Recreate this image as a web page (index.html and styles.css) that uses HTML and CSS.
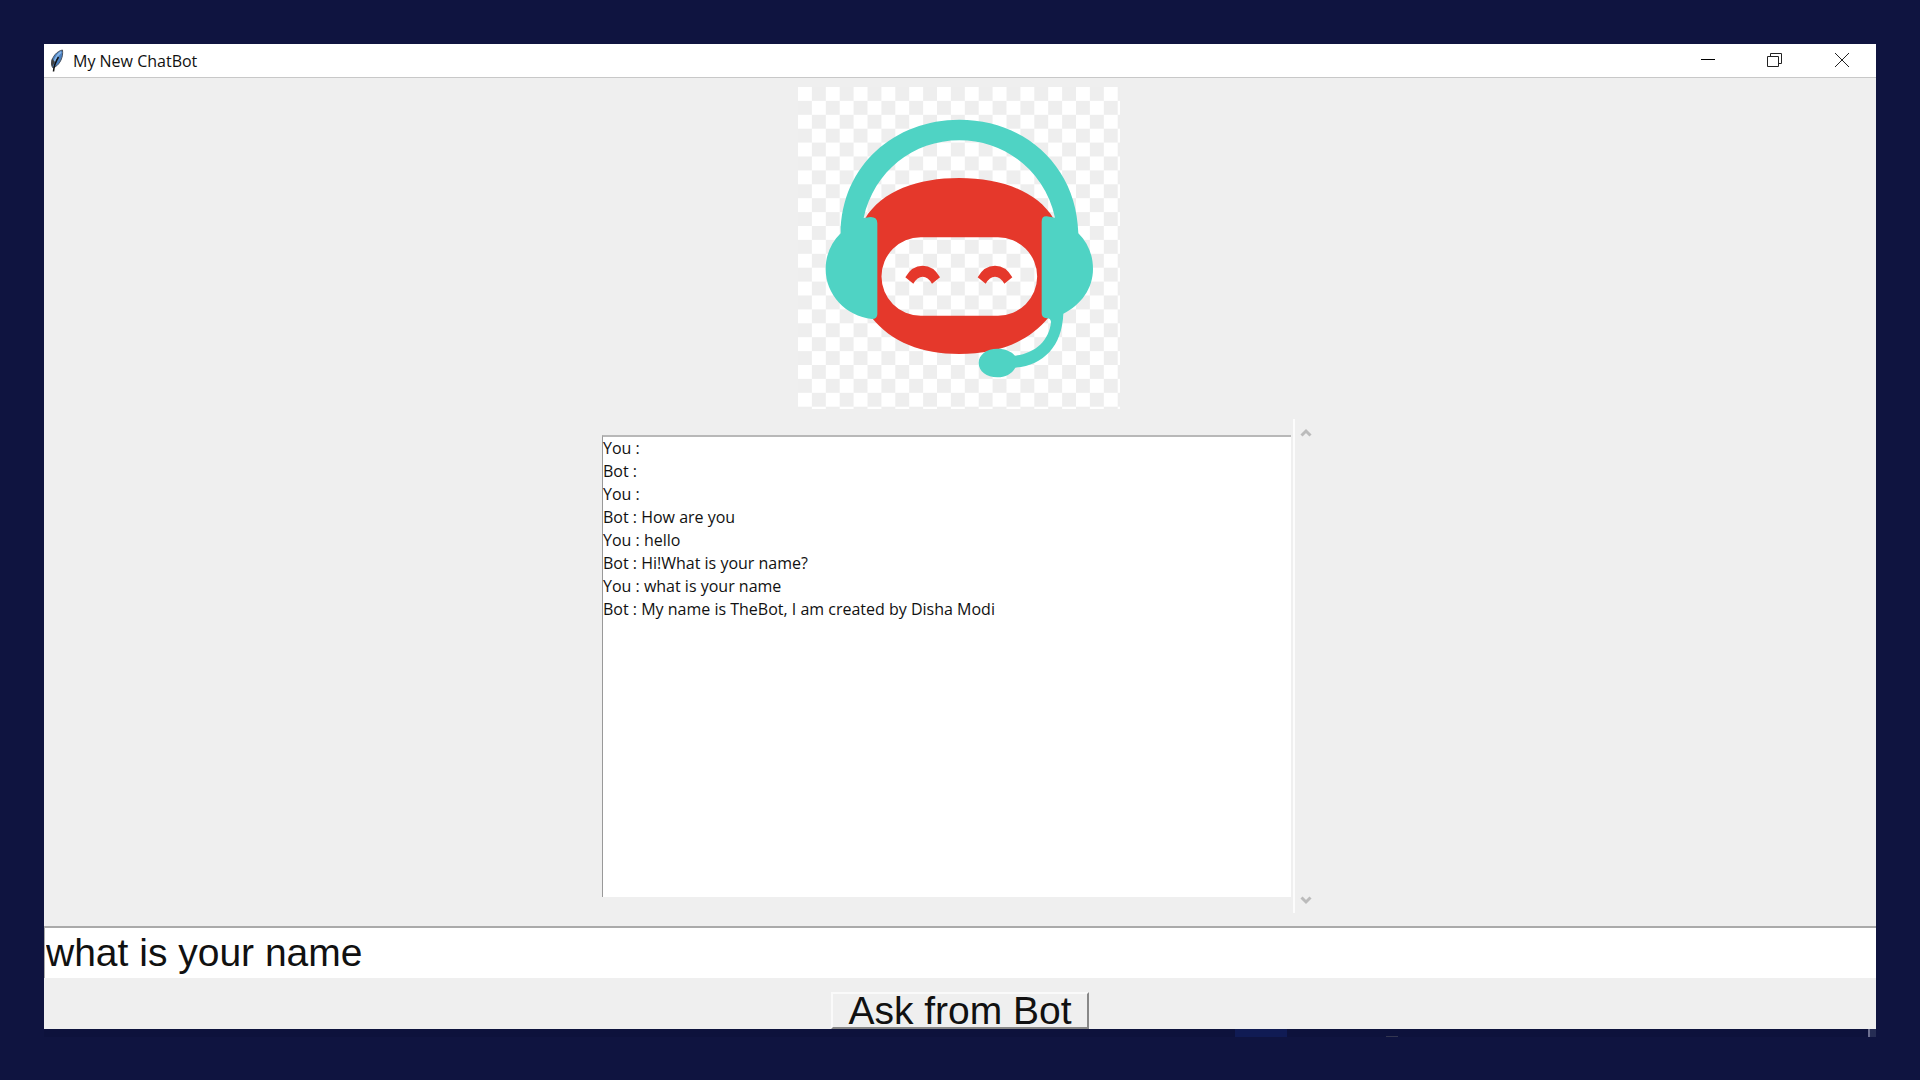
FILE: index.html
```html
<!DOCTYPE html>
<html lang="en">
<head>
<meta charset="utf-8">
<title>My New ChatBot</title>
<link rel="stylesheet" href="styles.css">
</head>
<body>
<div class="window">
  <header class="titlebar">
    <svg class="feather" viewBox="0 0 16 24" aria-hidden="true">
      <path d="M13.500 1C8 2 2.500 8 2.500 15l1 3.500 2.500-.5C11 15 14.500 8 13.500 1z" fill="#4a80c0" stroke="#4a5360" stroke-width="1"/>
      <path d="M12 3C8.500 6 6.500 9 5.500 13" fill="none" stroke="#86b4e6" stroke-width="2"/>
      <path d="M3 9.500C2 12 2 15 3 18L6 13z" fill="#444"/>
      <path d="M9.500 8C7 12 5 16 4.500 22.500" fill="none" stroke="#111" stroke-width="1.500"/>
    </svg>
    <h1 class="title">My New ChatBot</h1>
    <div class="controls">
      <button class="control" type="button" aria-label="Minimize">
        <svg class="glyph" viewBox="0 0 16 16"><path d="M1 7.500H15" stroke="#000"/></svg>
      </button>
      <button class="control" type="button" aria-label="Restore">
        <svg class="glyph" viewBox="0 0 16 16" fill="none" stroke="#222"><path d="M.5 4.500h11v10H.5zM3.500 4V1.500h11v10H12"/></svg>
      </button>
      <button class="control" type="button" aria-label="Close">
        <svg class="glyph" viewBox="0 0 16 16"><path d="M1 1L15 15M15 1L1 15" stroke="#222"/></svg>
      </button>
    </div>
  </header>
  <main class="content">
    <svg class="robot" viewBox="54 51 972 972" role="img" aria-label="Robot with a headset">
      <defs>
        <pattern id="checker" x="54" y="51" width="83.400" height="83.400" patternUnits="userSpaceOnUse">
          <rect width="83.400" height="83.400" fill="#eee"/>
          <path d="M0 0h41.700v41.700H0zM41.700 41.700h41.700v41.700H41.700z" fill="#fff"/>
        </pattern>
      </defs>
      <rect x="54" y="51" width="966" height="966" fill="url(#checker)"/>
      <path fill="#e5382b" fill-rule="evenodd" d="M255 446C305 362 415 324 538 324S770 362 821 446L806 742C745 818 650 852 538 852S335 818 274 742ZM422 502A117 117 0 0 0 422 737H654A117 117 0 0 0 654 502Z"/>
      <path fill="#4fd3c4" d="M182 490C184 285 345 149 538 149S890 285 895 490C924 519 939 555 939 597C939 655 903 705 850 731C846 830 790 885 706 893C695 912 676 922 652 922C620 922 596 904 596 879S620 836 652 836C676 836 694 844 705 857C765 850 808 812 813 755Q811 744 800 745Q785 744 785 730V455Q785 438 800 439L825 443C795 304 676 211 538 211S282 304 251 444L272 441Q292 441 292 460V732Q292 747 276 747C197 738 137 674 137 597C137 555 153 519 182 490Z"/>
      <path id="eye" fill="#e5382b" d="M376 622Q395 587 428 587T480 622L456 641Q444 620 428 620T400 641Z"/>
      <use href="#eye" x="217"/>
    </svg>
    <section class="chat" aria-label="Conversation">
      <ul class="log">
        <li>You :</li>
        <li>Bot :</li>
        <li>You :</li>
        <li>Bot : How are you</li>
        <li>You : hello</li>
        <li>Bot : Hi!What is your name?</li>
        <li>You : what is your name</li>
        <li>Bot : My name is TheBot, I am created by Disha Modi</li>
      </ul>
      <div class="scrollbar">
        <button class="arrow" type="button" aria-label="Scroll up">
          <svg class="chevron" viewBox="0 0 12 10"><path d="M1.500 7.500L6 3L10.500 7.500"/></svg>
        </button>
        <button class="arrow" type="button" aria-label="Scroll down">
          <svg class="chevron" viewBox="0 0 12 10"><path d="M1.500 2.500L6 7L10.500 2.500"/></svg>
        </button>
      </div>
    </section>
    <input class="entry" type="text" value="what is your name" aria-label="Your question">
    <button class="ask" type="button">Ask from Bot</button>
  </main>
</div>
<div class="taskbar">
  <span class="task"></span>
  <span class="peek"></span>
</div>
</body>
</html>
```
FILE: styles.css
```css
* {
  box-sizing: border-box;
}

body {
  display: flex;
  flex-direction: column;
  min-height: 100vh;
  margin: 0;
  padding: 44px 44px 43px;
  background: #0f1440;
  color: #111;
  font-family: "Open Sans", "Noto Sans", sans-serif;
}

button {
  padding: 0;
  border: 0;
  background: none;
  color: inherit;
}

.window {
  display: flex;
  flex: 1;
  flex-direction: column;
  background: #efefef;
}

.titlebar {
  display: flex;
  align-items: center;
  height: 34px;
  padding-left: 5px;
  border-bottom: 1px solid #c8c8c8;
  background: #fff;
}

.feather {
  width: 16px;
  height: 24px;
}

.title {
  flex: 1;
  margin: 0 0 0 8px;
  font-size: 16px;
  font-weight: 400;
  line-height: 24px;
}

.controls {
  display: flex;
}

.control {
  display: flex;
  align-items: center;
  justify-content: center;
  width: 67px;
  height: 33px;
  padding: 0 2px 2px 0;
}

.glyph {
  width: 16px;
  height: 16px;
}

.content {
  display: flex;
  flex: 1;
  flex-direction: column;
  align-items: center;
  padding-top: 9px;
}

.robot {
  width: 324px;
  height: 324px;
}

.chat {
  display: flex;
  flex: 1;
  width: 716px;
  max-width: 100%;
  min-height: 300px;
  margin: 8px 0 13px;
}

.log {
  flex: 1;
  margin: 16px 2px 16px 0;
  padding: 0;
  border-top: 2px solid #b8b8b8;
  border-left: 1px solid #999;
  background: #fff;
  font-size: 16px;
  line-height: 23px;
  list-style: none;
}

.scrollbar {
  display: flex;
  flex-direction: column;
  justify-content: space-between;
  width: 25px;
  padding: 1px 2px 0 0;
  border-left: 2px solid #fcfcfc;
}

.arrow {
  display: flex;
  align-items: center;
  justify-content: center;
  height: 26px;
}

.chevron {
  width: 12px;
  height: 10px;
  fill: none;
  stroke: #bbb;
  stroke-width: 3;
}

.entry,
.ask {
  font-family: "Liberation Sans", Arial, sans-serif;
  font-size: 39px;
}

.entry {
  width: 100%;
  height: 52px;
  padding: 0 1px;
  border: 0 solid #aaa;
  border-top-width: 2px;
  border-left-width: 1px;
  background: #fff;
  color: #111;
}

.ask {
  width: 258px;
  height: 37px;
  margin-top: 14px;
  border: 2px solid;
  border-color: #fafafa #888 #888 #fafafa;
  line-height: 34px;
}

.taskbar {
  display: flex;
  align-items: flex-end;
  height: 8px;
  background: linear-gradient(90deg, #0d123c calc(100% - 8px), #6d7090 0, #6d7090 calc(100% - 6px), #262d54 0);
}

.task {
  width: 52px;
  height: 8px;
  margin-left: 65%;
  background: #101b54;
}

.peek {
  width: 12px;
  height: 1px;
  margin-left: 99px;
  background: #333650;
}
```
